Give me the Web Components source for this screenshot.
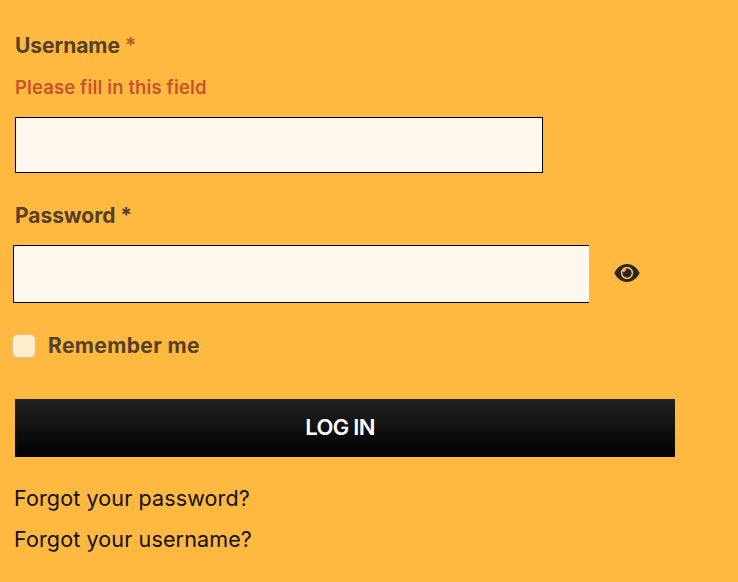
<!DOCTYPE html>
<html>
<head>
<meta charset="utf-8">
<style>
  html, body { margin: 0; height: 100%; }
  body { background: #ffb840; font-family: "Inter", "Noto Sans", sans-serif; overflow: hidden; }
</style>
</head>
<body>
<login-form></login-form>

<template id="field-label-tpl">
  <style>
    :host { display: block; font-size: 21px; line-height: 28px; font-weight: 700; color: #55402a; letter-spacing: -0.05px; }
    .req { color: var(--star, inherit); }
  </style>
  <slot></slot> <span class="req">*</span>
</template>

<template id="eye-tpl">
  <style>
    :host { display: inline-flex; width: 26px; height: 20px; color: #262626; }
    svg { width: 100%; height: 100%; display: block; }
  </style>
  <svg viewBox="0 0 26 20" aria-hidden="true">
    <path fill="currentColor" fill-rule="evenodd" d="M13 1C7.2 1 2.6 5.2 0.4 10 2.600 14.800 7.200 19 13 19s10.400-4.200 12.600-9C23.400 5.200 18.800 1 13 1zm0 2.800a6.200 6.200 0 1 1 0 12.400 6.200 6.200 0 0 1 0-12.400z"/>
    <path fill="currentColor" d="M13 5.400a4.600 4.600 0 1 1-4.600 4.600c0-.5.100-1 .2-1.400a2.300 2.300 0 0 0 3.100-3c.4-.1.900-.2 1.300-.2z"/>
  </svg>
</template>

<template id="login-form-tpl">
  <style>
    :host { display: block; width: 738px; height: 582px; box-sizing: border-box; padding: 32px 0 0 15px; }
    .hint { font-size: 18.500px; line-height: 24px; font-weight: 600; color: #c5562c; margin-top: 15px; letter-spacing: 0.12px; }
    input { display: block; box-sizing: border-box; background: #fff8ee; border: 1px solid #000; border-radius: 0; padding: 0; outline: none; }
    .user { width: 528px; height: 56px; margin-top: 18px; }
    .pw-label { margin-top: 29px; }
    .pw-row { display: flex; align-items: center; margin: 15px 0 0 -2px; }
    .pw { width: 576px; height: 58px; border-right: 0; }
    .pw-row icon-eye { margin: 0 0 2px 25px; }
    .remember { display: flex; align-items: center; margin: 31px 0 0 -3px; font-size: 21px; line-height: 24px; font-weight: 700; color: #55402a; letter-spacing: 0.36px; }
    .box { box-sizing: border-box; width: 24px; height: 24px; border: 1px solid #dcc08e; border-radius: 6px; background: #ffeccb; margin-right: 12px; }
    button { display: block; box-sizing: border-box; width: 660px; height: 58px; margin-top: 41px; border: 0; padding: 0 10px 2px 0; background: linear-gradient(#222222, #000000); color: #fff; font: 600 22px "Inter", "Noto Sans", sans-serif; letter-spacing: -0.7px; }
    .links { margin-top: 27px; display: flex; flex-direction: column; gap: 13px; margin-left: -1px; }
    a { font-size: 21.500px; line-height: 28px; color: #111; text-decoration: none; font-weight: 400; letter-spacing: 0.13px; }
  </style>
  <field-label style="--star:#c5562c">Username</field-label>
  <div class="hint">Please fill in this field</div>
  <input class="user" type="text">
  <field-label class="pw-label">Password</field-label>
  <div class="pw-row">
    <input class="pw" type="password">
    <icon-eye></icon-eye>
  </div>
  <div class="remember"><span class="box"></span>Remember me</div>
  <button>LOG IN</button>
  <div class="links">
    <a href="#">Forgot your password?</a>
    <a href="#">Forgot your username?</a>
  </div>
</template>

<script>
function stamp(el, id) {
  el.attachShadow({ mode: "open" });
  el.shadowRoot.appendChild(document.getElementById(id).content.cloneNode(true));
}

class FieldLabel extends HTMLElement {
  constructor() { super(); stamp(this, "field-label-tpl"); }
}
class IconEye extends HTMLElement {
  constructor() { super(); stamp(this, "eye-tpl"); }
}
class LoginForm extends HTMLElement {
  constructor() { super(); stamp(this, "login-form-tpl"); }
}

customElements.define("field-label", FieldLabel);
customElements.define("icon-eye", IconEye);
customElements.define("login-form", LoginForm);
</script>
</body>
</html>
